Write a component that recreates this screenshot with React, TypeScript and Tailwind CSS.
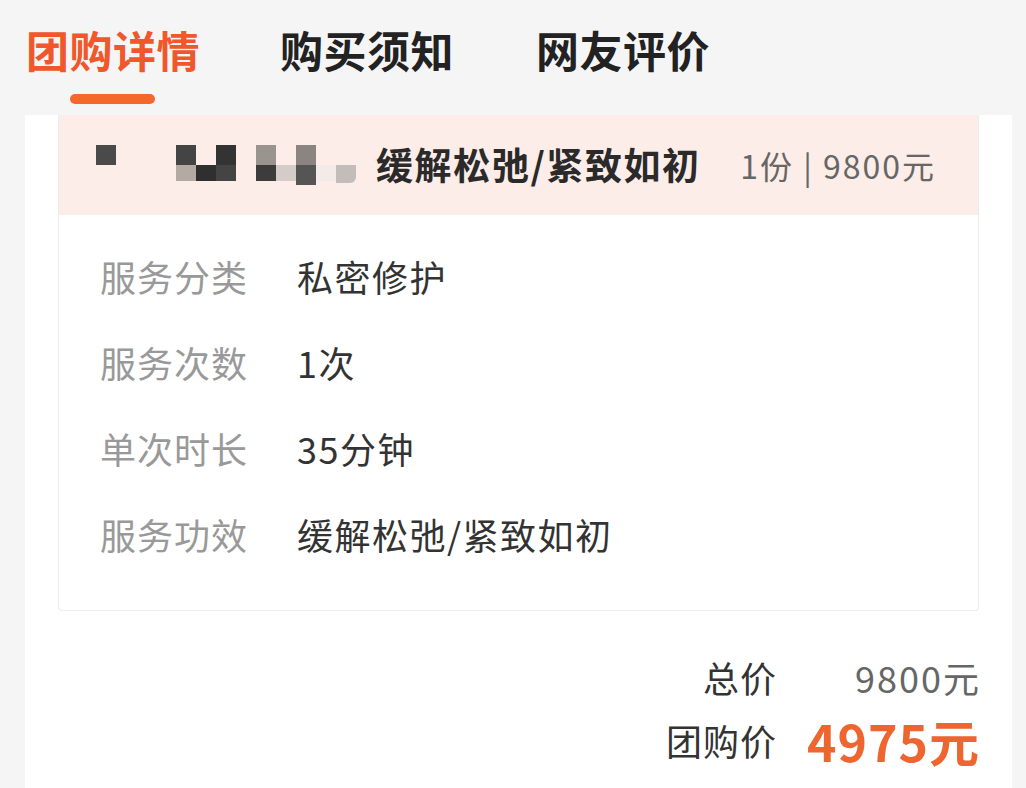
import React from "react";

const font = { fontFamily: '"Noto Sans CJK SC", "Noto Sans", sans-serif' };

function Pixels() {
  const cols: [string, string][] = [
    ["#444444", "#b3aaa4"],
    ["transparent", "#2f2f2f"],
    ["#333333", "#444444"],
    ["transparent", "transparent"],
    ["#9a948f", "#3c3c3c"],
    ["transparent", "#d3ccc8"],
    ["#8b8581", "#555555"],
    ["transparent", "#f2ebe8"],
    ["transparent", "#c2bdb9"],
  ];
  return (
    <div className="flex items-start">
      <div className="w-[20px] h-[20px] bg-[#4a4a4a]" />
      <div className="w-[60px]" />
      <div className="flex">
        {cols.map((c, i) => (
          <div key={i} className="flex flex-col w-[20px]">
            <div className="h-[20px]" style={{ background: c[0] }} />
            <div
              className={i === 8 ? "h-[18px] rounded-br-[6px]" : i === 6 ? "h-[20px]" : "h-[16px]"}
              style={{ background: c[1] }}
            />
          </div>
        ))}
      </div>
    </div>
  );
}

const rows = [
  ["服务分类", "私密修护"],
  ["服务次数", "1次"],
  ["单次时长", "35分钟"],
  ["服务功效", "缓解松弛/紧致如初"],
];

export default function App() {
  return (
    <div className="w-[1026px] h-[788px] bg-[#f5f5f5] overflow-hidden" style={font}>
      <div className="h-[115px] flex flex-col">
        <div className="flex items-center h-[94px] pl-[26px] pt-[4px]">
          <span className="text-[43px] font-bold text-[#f0572c] tracking-[0.5px]">团购详情</span>
          <span className="text-[43px] font-bold text-[#222] ml-[80px] tracking-[0.5px]">购买须知</span>
          <span className="text-[43px] font-bold text-[#222] ml-[82px] tracking-[0.5px]">网友评价</span>
        </div>
        <div className="ml-[70px] w-[85px] h-[10px] rounded-full bg-[#f4682a]" />
      </div>
      <div className="ml-[25px] w-[987px] h-[673px] bg-white px-[33px]">
        <div className="border border-[#ececec] border-t-0 rounded-b-[4px] h-[496px]">
          <div className="h-[100px] bg-[#fdede8] flex items-center pl-[37px] pr-[42px]">
            <Pixels />
            <span className="ml-[20px] text-[37px] font-bold text-[#2a2a2a] tracking-[1.6px]">缓解松弛/紧致如初</span>
            <span className="ml-auto text-[32px] text-[#666] tracking-[2px]">1份 | 9800元</span>
          </div>
          <div className="flex flex-col pt-[36px] pl-[41px] gap-[36px]">
            {rows.map(([k, v]) => (
              <div key={k} className="flex items-center h-[50px]">
                <span className="w-[197px] text-[36px] text-[#999] tracking-[1px]">{k}</span>
                <span className="text-[36px] text-[#333] tracking-[1.5px]">{v}</span>
              </div>
            ))}
          </div>
        </div>
        <div className="flex flex-col items-end pt-[41px]">
          <div className="flex items-center h-[50px]">
            <span className="text-[36px] text-[#333] tracking-[1px]">总价</span>
            <span className="ml-[78px] text-[36px] text-[#666] tracking-[2px] mr-[-2px]">9800元</span>
          </div>
          <div className="flex items-center h-[60px] mt-[8px]">
            <span className="text-[36px] text-[#333] tracking-[1px]">团购价</span>
            <span className="ml-[30px] text-[50px] font-bold text-[#ee6530] tracking-[1px] mr-[-1px]">4975元</span>
          </div>
        </div>
      </div>
    </div>
  );
}
